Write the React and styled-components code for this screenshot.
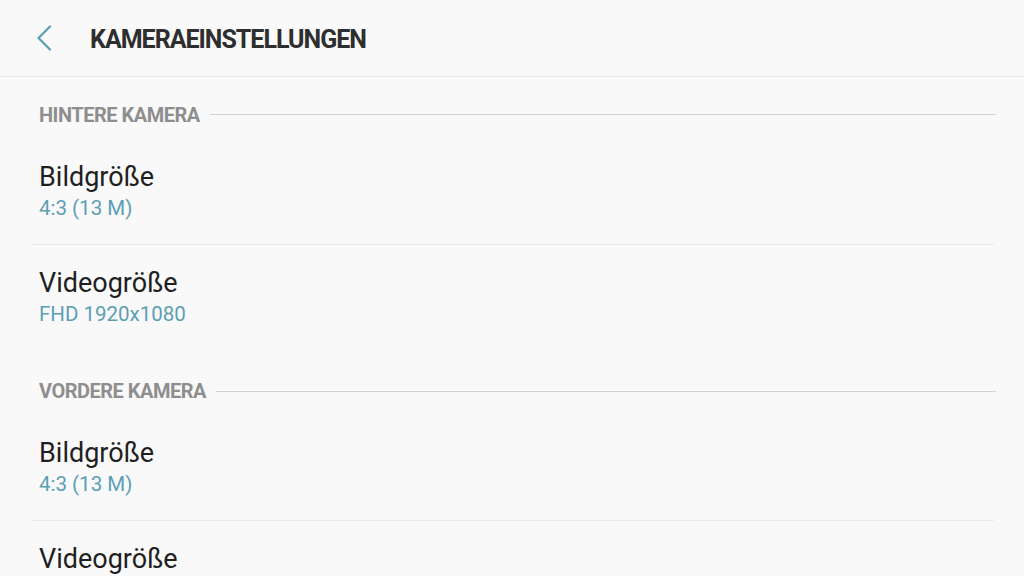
import React from "react";
import styled, { createGlobalStyle } from "styled-components";

const Global = createGlobalStyle`
  html, body {
    margin: 0;
    padding: 0;
    background: #f9f9f9;
  }
  body {
    font-family: Roboto, "Noto Sans", sans-serif;
    overflow: hidden;
  }
`;

const Page = styled.div`
  width: 1024px;
  height: 576px;
  background: #f9f9f9;
  overflow: hidden;
`;

const Header = styled.header`
  height: 76px;
  display: flex;
  align-items: center;
  border-bottom: 1px solid #e9e9e9;
`;

const BackButton = styled.button`
  border: 0;
  background: none;
  padding: 0;
  margin-left: 35px;
  width: 18px;
  height: 28px;
  display: flex;
  align-items: center;
  justify-content: center;
`;

const Title = styled.h1`
  margin: 2px 0 0 37px;
  font-size: 25px;
  font-weight: 700;
  color: #2e2e2e;
  letter-spacing: -1px;
`;

const List = styled.div`
  padding: 0 28px 0 32px;
`;

const Section = styled.div`
  height: ${(p) => (p.first ? 62 : 64)}px;
  display: flex;
  align-items: center;
  gap: 10px;
  padding: ${(p) => (p.first ? "13px" : "16px")} 0 0 7px;
  box-sizing: border-box;
`;

const SectionLabel = styled.span`
  font-size: 20px;
  font-weight: 700;
  color: #8e8e8e;
  letter-spacing: -0.5px;
`;

const SectionLine = styled.div`
  flex: 1;
  height: 1px;
  background: #d2d2d2;
`;

const Item = styled.div`
  padding: 22px 0 23px 7px;
  border-bottom: 1px solid ${(p) => (p.divider ? "#ebebeb" : "transparent")};
  margin-right: 2px;
`;

const ItemTitle = styled.div`
  font-size: 27px;
  line-height: 32px;
  color: #1f1f1f;
`;

const ItemValue = styled.div`
  margin-top: 2px;
  font-size: 20.5px;
  line-height: 26px;
  color: #5b9fb4;
`;

const sections = [
  {
    label: "HINTERE KAMERA",
    items: [
      { title: "Bildgröße", value: "4:3 (13 M)" },
      { title: "Videogröße", value: "FHD 1920x1080" },
    ],
  },
  {
    label: "VORDERE KAMERA",
    items: [
      { title: "Bildgröße", value: "4:3 (13 M)" },
      { title: "Videogröße", value: "FHD 1920x1080" },
    ],
  },
];

export default function App() {
  return (
    <Page>
      <Global />
      <Header>
        <BackButton aria-label="Zurück">
          <svg width="16" height="26" viewBox="0 0 16 26">
            <path
              d="M14 1.5 L2.5 13 L14 24.5"
              fill="none"
              stroke="#5b9db2"
              strokeWidth="2.2"
              strokeLinecap="round"
              strokeLinejoin="round"
            />
          </svg>
        </BackButton>
        <Title>KAMERAEINSTELLUNGEN</Title>
      </Header>
      <List>
        {sections.map((s, si) => (
          <div key={s.label}>
            <Section first={si === 0}>
              <SectionLabel>{s.label}</SectionLabel>
              <SectionLine />
            </Section>
            {s.items.map((it, i) => (
              <Item key={it.title} divider={i < s.items.length - 1}>
                <ItemTitle>{it.title}</ItemTitle>
                <ItemValue>{it.value}</ItemValue>
              </Item>
            ))}
          </div>
        ))}
      </List>
    </Page>
  );
}
